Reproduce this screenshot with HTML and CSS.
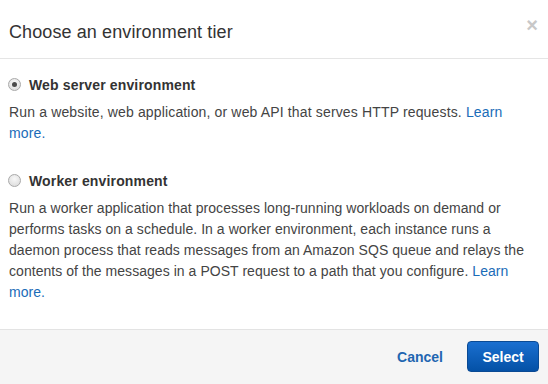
FILE: index.html
```html
<!DOCTYPE html>
<html lang="en">
<head>
  <meta charset="UTF-8" />
  <title>Choose an environment tier</title>
  <link rel="stylesheet" href="styles.css">
</head>
<body>

  <div class="modal">
    <div class="modal-header">
      <h1>Choose an environment tier</h1>
      <button class="close" aria-label="Close">&times;</button>
    </div>

    <div class="modal-body">
      <!-- Web server tier -->
      <div class="tier">
        <label class="tier-label">
          <input type="radio" name="tier" value="web" checked />
          <span>Web server environment</span>
        </label>
        <p class="wide">Run a website, web application, or web API that serves HTTP requests. <a href="#">Learn<br>more.</a></p>
      </div>

      <!-- Worker tier -->
      <div class="tier">
        <label class="tier-label">
          <input type="radio" name="tier" value="worker" />
          <span>Worker environment</span>
        </label>
        <p>Run a worker application that processes long-running workloads on demand or<br>
          performs tasks on a schedule. In a worker environment, each instance runs a<br>
          daemon process that reads messages from an Amazon SQS queue and relays the<br>
          contents of the messages in a POST request to a path that you configure. <a href="#">Learn<br>more.</a></p>
      </div>
    </div>

    <div class="modal-footer">
      <button class="btn-link">Cancel</button>
      <button class="btn-primary">Select</button>
    </div>
  </div>

</body>
</html>
```

FILE: styles.css
```css
* { box-sizing: border-box; margin: 0; padding: 0; }
body {
  background: #fff;
  font-family: "Liberation Sans", Arial, sans-serif;
  color: #444;
}
.modal {
  width: 548px;
  height: 384px;
  display: flex;
  flex-direction: column;
}
.modal-header {
  display: flex;
  justify-content: space-between;
  align-items: flex-start;
  height: 60px;
  padding: 20px 9px 0 9px;
  border-bottom: 1px solid #e5e5e5;
}
.modal-header h1 {
  font-size: 18px;
  font-weight: normal;
  color: #333;
  line-height: 24px;
  letter-spacing: 0.1px;
}
.close {
  background: none;
  border: none;
  font-family: "Liberation Sans", Arial, sans-serif;
  font-size: 20px;
  font-weight: bold;
  line-height: 20px;
  color: #c8c8c8;
  margin: -5px 1px 0 0;
  cursor: pointer;
}
.modal-body {
  flex: 1;
  padding: 15px 0 0 9px;
}
.tier { margin-bottom: 26px; }
.tier-label {
  display: flex;
  align-items: center;
  gap: 8px;
  font-size: 14px;
  font-weight: bold;
  color: #333;
  height: 22px;
  letter-spacing: 0.15px;
}
.tier-label input {
  appearance: none;
  width: 13px;
  height: 13px;
  margin-left: -1px;
  border: 1px solid #a9a9a9;
  border-radius: 50%;
  background: radial-gradient(circle at 50% 35%, #f8f8f8, #d8d8d8);
  display: grid;
  place-items: center;
}
.tier-label input:checked::after {
  content: "";
  width: 5px;
  height: 5px;
  border-radius: 50%;
  background: #4a4a4a;
}
.tier p {
  font-size: 14px;
  line-height: 21px;
  margin-top: 6px;
  letter-spacing: 0.05px;
  white-space: nowrap;
}
.tier p.wide { letter-spacing: 0.15px; }
.tier a {
  color: #1a6cb8;
  text-decoration: none;
}
.modal-footer {
  display: flex;
  justify-content: flex-end;
  align-items: center;
  gap: 24px;
  height: 57px;
  padding: 0 9px 0 0;
  background: #f5f5f5;
  border-top: 1px solid #e3e3e3;
}
.btn-link {
  background: none;
  border: none;
  color: #1f66b1;
  font-family: "Liberation Sans", Arial, sans-serif;
  font-weight: bold;
  font-size: 14px;
  cursor: pointer;
}
.btn-primary {
  width: 72px;
  height: 31px;
  background: linear-gradient(#1a6fd0, #0451a6);
  border: 1px solid #0a4a94;
  border-radius: 4px;
  color: #fff;
  font-family: "Liberation Sans", Arial, sans-serif;
  font-weight: bold;
  font-size: 14px;
  cursor: pointer;
}
```
